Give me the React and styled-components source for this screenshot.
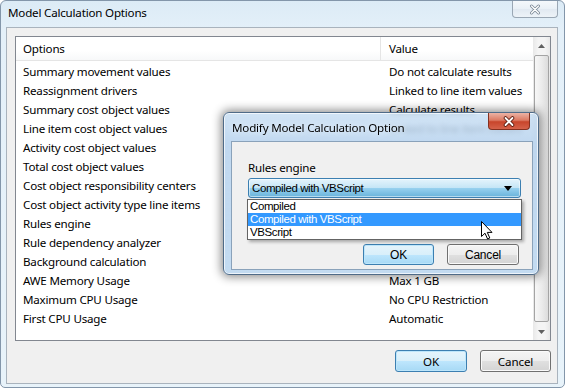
import React from "react";
import styled, { createGlobalStyle } from "styled-components";

const GlobalStyle = createGlobalStyle`
  html, body {
    margin: 0;
    padding: 0;
    overflow: hidden;
    background: #ffffff;
  }
`;

const Window = styled.div`
  position: relative;
  width: 565px;
  height: 388px;
  box-sizing: border-box;
  border: 1px solid #8396aa;
  border-radius: 6px 6px 5px 5px;
  background: linear-gradient(#dcebf6, #e4f0f9 30px, #e8f3fa);
  display: flex;
  flex-direction: column;
  font-family: "Noto Sans", "Open Sans", sans-serif;
  font-size: 11.6px;
  letter-spacing: -0.2px;
  color: #000;
`;

const TitleBar = styled.div`
  height: 26px;
  display: flex;
  justify-content: space-between;
  align-items: flex-start;
`;

const Title = styled.div`
  margin: 4px 0 0 7px;
  line-height: 16px;
`;

const CaptionButton = styled.div`
  width: ${(p) => p.$w}px;
  height: 17px;
  margin-right: ${(p) => p.$mr}px;
  box-sizing: border-box;
  border: 1px solid ${(p) => (p.$red ? "#84301f" : "#9aa7b4")};
  border-top: none;
  border-radius: 0 0 4px 4px;
  background: ${(p) =>
    p.$red
      ? "linear-gradient(#ecb3a5, #dc7a63 45%, #c8452b 55%, #d5624a)"
      : "linear-gradient(#f4f8fb, #e9f0f6 50%, #e1e9f1 51%, #edf3f8)"};
  display: flex;
  align-items: center;
  justify-content: center;
`;

const Panel = styled.div`
  flex: 1;
  margin: 0 6px 3px 5px;
  background: #f0f0f0;
  border: 1px solid #a9b3bd;
  padding: 8px 6px 11px 8px;
  display: flex;
  flex-direction: column;
`;

const ListBox = styled.div`
  height: 305px;
  box-sizing: border-box;
  border: 1px solid #828790;
  background: #fff;
  display: flex;
`;

const Table = styled.div`
  flex: 1;
  display: flex;
  flex-direction: column;
`;

const HeaderRow = styled.div`
  height: 23px;
  display: grid;
  grid-template-columns: 364px 1fr;
  border-bottom: 1px solid #e5e5e5;
  background: linear-gradient(#ffffff, #ffffff 60%, #f7f8f9);
`;

const HeaderCell = styled.div`
  padding-left: ${(p) => (p.$value ? 8 : 7)}px;
  line-height: 23px;
  border-left: ${(p) => (p.$value ? "1px solid #e5e5e5" : "none")};
`;

const Rows = styled.div`
  padding-top: 1px;
`;

const Row = styled.div`
  display: grid;
  grid-template-columns: 364px 1fr;
  height: 19px;
  line-height: 19px;
`;

const Cell = styled.div`
  padding-left: ${(p) => (p.$value ? 9 : 7)}px;
  white-space: nowrap;
  overflow: hidden;
`;

const ScrollBar = styled.div`
  width: 17px;
  background: linear-gradient(90deg, #e8e8e8, #f4f4f4 30%, #f4f4f4 70%, #e8e8e8);
  display: flex;
  flex-direction: column;
`;

const ScrollArrow = styled.div`
  height: 17px;
  display: flex;
  align-items: center;
  justify-content: center;
`;

const Thumb = styled.div`
  flex: 1;
  margin: 1px;
  border: 1px solid #a4a4a4;
  border-radius: 2px;
  background: linear-gradient(90deg, #f7f7f7, #ececec 50%, #dcdcdc);
`;

const ButtonRow = styled.div`
  margin-top: ${(p) => p.$mt}px;
  margin-right: ${(p) => p.$mr || 0}px;
  display: flex;
  justify-content: flex-end;
  gap: 13px;
`;

const Button = styled.button`
  width: ${(p) => p.$w}px;
  height: ${(p) => p.$h}px;
  padding: 0;
  box-sizing: border-box;
  border-radius: 3px;
  font-family: ${(p) =>
    p.$classic ? '"Liberation Sans", Arial, sans-serif' : '"Noto Sans", "Open Sans", sans-serif'};
  font-size: ${(p) => (p.$classic ? "12px" : "11.6px")};
  letter-spacing: ${(p) => (p.$classic ? "-0.2px" : "-0.1px")};
  color: #000;
  border: 1px solid ${(p) => (p.$default ? "#3c7fb1" : "#707070")};
  background: ${(p) =>
    p.$default
      ? "linear-gradient(#e5f4fc, #d9effa 50%, #bee6fd 51%, #a7d9f5)"
      : "linear-gradient(#f4f4f4, #ededed 50%, #e0e0e0 51%, #d4d4d4)"};
  box-shadow: ${(p) => (p.$default ? "inset 0 0 0 1px #bde6fb" : "inset 0 0 0 1px #fafafa")};
`;

/* modal dialog floats over the main list */
const Modal = styled.div`
  position: absolute;
  left: 222px;
  top: 111px;
  width: 316px;
  height: 163px;
  box-sizing: border-box;
  border: 1px solid #4f6b88;
  border-radius: 6px;
  background: linear-gradient(rgba(196, 220, 242, 0.78), rgba(186, 212, 238, 0.9) 30px, #c3dbf1);
  backdrop-filter: blur(2.5px);
  box-shadow: 0 0 10px 2px rgba(0, 0, 0, 0.45), inset 0 0 0 1px rgba(255, 255, 255, 0.7);
  display: flex;
  flex-direction: column;
`;

const ModalTitleBar = styled.div`
  height: 28px;
  display: flex;
  justify-content: space-between;
  align-items: flex-start;
`;

const ModalTitle = styled.div`
  margin: 7px 0 0 8px;
  line-height: 16px;
  text-shadow: 0 0 6px rgba(255, 255, 255, 0.9);
`;

const ModalBody = styled.div`
  flex: 1;
  margin: 0 5px 4px 7px;
  border: 1px solid #8aa2ba;
  background: #f0f0f0;
  padding: 18px 11px 4px 16px;
  display: flex;
  flex-direction: column;
`;

const FieldLabel = styled.div`
  line-height: 15px;
  margin-bottom: 3px;
`;

const SelectWrap = styled.div`
  position: relative;
`;

const Select = styled.div`
  height: 20px;
  box-sizing: border-box;
  border: 1px solid #3c7fb1;
  border-radius: 3px;
  background: linear-gradient(#e5f4fc, #c4e5f6 50%, #98d1ef 51%, #68b3db);
  box-shadow: inset 0 0 0 1px rgba(255, 255, 255, 0.5);
  display: flex;
  align-items: center;
  justify-content: space-between;
  padding: 0 8px 0 3px;
  font-family: "Liberation Sans", Arial, sans-serif;
  font-size: 11.5px;
  letter-spacing: -0.4px;
`;

const DropList = styled.div`
  position: absolute;
  left: -1px;
  right: -1px;
  top: 21px;
  height: 41px;
  box-sizing: border-box;
  border: 1px solid #646464;
  background: #fff;
  box-shadow: 2px 2px 3px rgba(0, 0, 0, 0.3);
  z-index: 2;
`;

const DropItem = styled.div`
  height: 13px;
  line-height: 13px;
  padding-left: 2px;
  font-family: "Liberation Sans", Arial, sans-serif;
  font-size: 11.5px;
  letter-spacing: -0.4px;
  background: ${(p) => (p.$selected ? "#3399ff" : "transparent")};
  color: ${(p) => (p.$selected ? "#fff" : "#000")};
`;

const Pointer = styled.svg`
  position: absolute;
  left: 480px;
  top: 220px;
  z-index: 3;
`;

const rows = [
  ["Summary movement values", "Do not calculate results"],
  ["Reassignment drivers", "Linked to line item values"],
  ["Summary cost object values", "Calculate results"],
  ["Line item cost object values", "Linked to line item values"],
  ["Activity cost object values", ""],
  ["Total cost object values", ""],
  ["Cost object responsibility centers", ""],
  ["Cost object activity type line items", ""],
  ["Rules engine", ""],
  ["Rule dependency analyzer", ""],
  ["Background calculation", ""],
  ["AWE Memory Usage", "Max 1 GB"],
  ["Maximum CPU Usage", "No CPU Restriction"],
  ["First CPU Usage", "Automatic"],
];

const options = ["Compiled", "Compiled with VBScript", "VBScript"];

const CloseGlyph = ({ red }) => (
  <svg width="14" height="11" viewBox="0 0 14 11">
    <path
      d="M3.5 2 L10.5 9 M10.5 2 L3.5 9"
      stroke={red ? "#5a1a0e" : "#7d8a97"}
      strokeWidth={red ? 3.6 : 3}
      strokeLinecap="round"
      fill="none"
    />
    <path
      d="M3.5 2 L10.5 9 M10.5 2 L3.5 9"
      stroke="#ffffff"
      strokeWidth={red ? 1.8 : 1.4}
      strokeLinecap="round"
      fill="none"
    />
  </svg>
);

const Triangle = ({ up, color = "#606060", w = 7, h = 4 }) => (
  <svg width={w} height={h} viewBox={`0 0 ${w} ${h}`}>
    <path d={up ? `M0 ${h} L${w / 2} 0 L${w} ${h} Z` : `M0 0 L${w} 0 L${w / 2} ${h} Z`} fill={color} />
  </svg>
);

const App = () => {
  return (
    <>
      <GlobalStyle />
      <Window>
        <TitleBar>
          <Title>Model Calculation Options</Title>
          <CaptionButton $w={46} $mr={6}>
            <CloseGlyph />
          </CaptionButton>
        </TitleBar>

        <Panel>
          <ListBox>
            <Table>
              <HeaderRow>
                <HeaderCell>Options</HeaderCell>
                <HeaderCell $value>Value</HeaderCell>
              </HeaderRow>
              <Rows>
                {rows.map(([name, value]) => (
                  <Row key={name}>
                    <Cell>{name}</Cell>
                    <Cell $value>{value}</Cell>
                  </Row>
                ))}
              </Rows>
            </Table>
            <ScrollBar>
              <ScrollArrow>
                <Triangle up />
              </ScrollArrow>
              <Thumb />
              <ScrollArrow>
                <Triangle />
              </ScrollArrow>
            </ScrollBar>
          </ListBox>
          <ButtonRow $mt={9}>
            <Button $w={72} $h={22} $default>
              OK
            </Button>
            <Button $w={71} $h={22}>
              Cancel
            </Button>
          </ButtonRow>
        </Panel>

        <Modal>
          <ModalTitleBar>
            <ModalTitle>Modify Model Calculation Option</ModalTitle>
            <CaptionButton $w={42} $mr={8} $red>
              <CloseGlyph red />
            </CaptionButton>
          </ModalTitleBar>
          <ModalBody>
            <FieldLabel>Rules engine</FieldLabel>
            <SelectWrap>
              <Select>
                <span>Compiled with VBScript</span>
                <Triangle color="#000" w={8} h={5} />
              </Select>
              <DropList>
                {options.map((o) => (
                  <DropItem key={o} $selected={o === "Compiled with VBScript"}>
                    {o}
                  </DropItem>
                ))}
              </DropList>
            </SelectWrap>
            <ButtonRow $mt={46} $mr={2}>
              <Button $w={71} $h={21} $default $classic>
                OK
              </Button>
              <Button $w={72} $h={21} $classic>
                Cancel
              </Button>
            </ButtonRow>
          </ModalBody>
        </Modal>

        <Pointer width="13" height="19" viewBox="0 0 13 19">
          <path
            d="M0.5 0.5 L0.5 15.5 L4 12.2 L6.6 18 L8.8 17 L6.3 11.4 L11 11.4 Z"
            fill="#ffffff"
            stroke="#000000"
            strokeWidth="1"
            strokeLinejoin="round"
          />
        </Pointer>
      </Window>
    </>
  );
};

export default App;
